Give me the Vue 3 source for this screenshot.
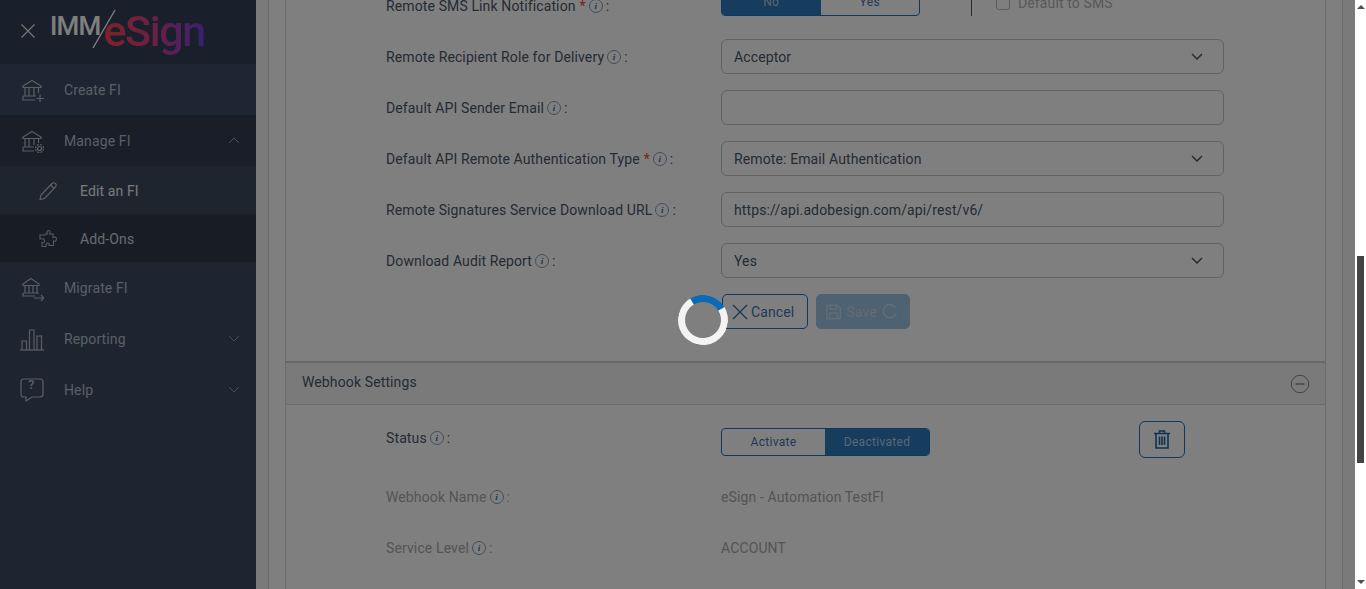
<script setup>
const rows = [
  { label: 'Remote Recipient Role for Delivery', type: 'select', value: 'Acceptor' },
  { label: 'Default API Sender Email', type: 'input', value: '' },
  { label: 'Default API Remote Authentication Type', star: true, type: 'select', value: 'Remote: Email Authentication' },
  { label: 'Remote Signatures Service Download URL', type: 'input', value: 'https://api.adobesign.com/api/rest/v6/' },
  { label: 'Download Audit Report', type: 'select', value: 'Yes' }
]
</script>

<template>
  <div class="root">
    <aside class="side">
      <div class="brand">
        <svg class="close" width="14" height="14" viewBox="0 0 14 14"><path d="M0.5 0.5L13.5 13.5M13.5 0.5L0.5 13.5" fill="none" stroke="#e8e8e8" stroke-width="1.3"/></svg>
        <div class="logo">
          <span class="imm">IMM</span>
          <svg class="slash" width="24" height="40" viewBox="0 0 24 40"><path d="M1 39L23 1" stroke="#ffffff" stroke-width="1.400" fill="none"/></svg>
          <span class="esign">eSign</span>
        </div>
      </div>

      <div class="item create">
        <svg class="ico" width="24" height="26" viewBox="0 0 24 26" fill="none" stroke="#b4bec9" stroke-width="1.2"><path d="M3 9L12 3.5L21 9V10.5H3Z"/><path d="M5 10.5V19M9 10.5V19M14 10.5V19M18.500 10.500V16"/><path d="M3 19H16M3 19V23H15"/><path d="M20 17.500V25M16.500 21.500H24"/></svg>
        <span>Create FI</span>
      </div>
      <div class="item manage">
        <svg class="ico" width="24" height="26" viewBox="0 0 24 26" fill="none" stroke="#b4bec9" stroke-width="1.2"><path d="M3 9L12 3.500L21 9V10.500H3Z"/><path d="M5 10.500V19M9 10.500V19M14 10.500V17M18.500 10.500V15"/><path d="M3 19H14M3 19V23H14"/><circle cx="19.500" cy="20.500" r="2"/><circle cx="19.500" cy="20.500" r="4" stroke-dasharray="2 1.140"/></svg>
        <span>Manage FI</span>
        <svg class="chev" width="12" height="7" viewBox="0 0 12 7"><path d="M1 6L6 1L11 6" fill="none" stroke="#8e9aa8" stroke-width="1"/></svg>
      </div>
      <div class="sub edit">
        <svg width="20" height="20" viewBox="0 0 20 20" fill="none" stroke="#c0c4ca" stroke-width="1.1"><path d="M3 14L14 2.500Q16 1 17.500 2.500T17.500 6L6.500 17.500L2 18.500Z"/><path d="M12.500 4L16 7.500"/></svg>
        <span>Edit an FI</span>
      </div>
      <div class="sub addons">
        <svg width="20" height="20" viewBox="0 0 20 20" fill="none" stroke="#aab4c0" stroke-width="1.1"><path d="M7 5H9.500Q8 2 10.500 1.500Q13 2 11.500 5H15V8.500Q18 7 18.500 10Q18 13 15.500 12V16.500H11Q12 14 9.500 14Q7.500 14.500 8 17.500H4V13.500Q7 14 6.500 11.500Q6 9 2 10V6H7Z"/></svg>
        <span>Add-Ons</span>
      </div>
      <div class="item">
        <svg class="ico" width="24" height="26" viewBox="0 0 24 26" fill="none" stroke="#b4bec9" stroke-width="1.2"><path d="M3 9L11 3.500L19 9V10.500H3Z"/><path d="M5 10.500V18M9 10.500V18M13 10.500V18M17 10.500V18"/><path d="M3 18H19M3 18V21H15"/><path d="M14 23H24M21 20L24 23L21 26"/></svg>
        <span>Migrate FI</span>
      </div>
      <div class="item">
        <svg class="ico" width="24" height="26" viewBox="0 0 24 26" fill="none" stroke="#b4bec9" stroke-width="1.2"><path d="M0 24H24"/><path d="M2 24V15H6.500V24M9.500 24V4H14V24M17 24V10H21.500V24"/></svg>
        <span>Reporting</span>
        <svg class="chev" width="12" height="7" viewBox="0 0 12 7"><path d="M1 1L6 6L11 1" fill="none" stroke="#8e9aa8" stroke-width="1"/></svg>
      </div>
      <div class="item">
        <svg class="ico" width="24" height="26" viewBox="0 0 24 26" fill="none" stroke="#b4bec9" stroke-width="1.2"><path d="M4 2H20Q23 2 23 5V17Q23 20 20 20H12L6 24V20H4Q1 20 1 17V5Q1 2 4 2Z"/></svg>
        <span class="qm">?</span>
        <span>Help</span>
        <svg class="chev" width="12" height="7" viewBox="0 0 12 7"><path d="M1 1L6 6L11 1" fill="none" stroke="#8e9aa8" stroke-width="1"/></svg>
      </div>
    </aside>

    <main class="main">
      <div class="panel">
        <div class="card">
          <section class="form">
            <div class="row">
              <div class="label">Remote SMS Link Notification<span class="star">*</span><i class="info">i</i><span class="colon">:</span></div>
              <div class="top-ctl">
                <div class="toggle sms"><span class="on">No</span><span>Yes</span></div>
                <span class="vline"></span>
                <span class="check"></span>
                <span class="check-text">Default to SMS</span>
              </div>
            </div>

            <div v-for="r in rows" :key="r.label" class="row">
              <div class="label">{{ r.label }}<span v-if="r.star" class="star">*</span><i class="info">i</i><span class="colon">:</span></div>
              <div class="control">
                <span>{{ r.value }}</span>
                <svg v-if="r.type === 'select'" width="12" height="7" viewBox="0 0 12 7"><path d="M1 1L6 6L11 1" fill="none" stroke="#4a5668" stroke-width="1.500"/></svg>
              </div>
            </div>

            <div class="row btn-row">
              <div></div>
              <div class="btns">
                <button class="btn cancel">
                  <svg width="16" height="16" viewBox="0 0 16 16"><path d="M1 1L15 15M15 1L1 15" fill="none" stroke="#2a6aa6" stroke-width="1.200"/></svg>
                  Cancel
                </button>
                <button class="btn save">
                  <svg width="16" height="16" viewBox="0 0 16 16" fill="none" stroke="#c8d8e8" stroke-width="1.600"><path d="M1 1H12L15 4V15H1Z"/><path d="M4 1V5H11V1M4 15V9H12V15"/></svg>
                  Save
                  <svg width="16" height="16" viewBox="0 0 16 16" fill="none" stroke="#c8d8e8" stroke-width="1.600"><path d="M14 3A7 7 0 1 0 15 9"/></svg>
                </button>
              </div>
            </div>
          </section>

          <header class="sec-head">
            <span>Webhook Settings</span>
            <svg width="20" height="20" viewBox="0 0 20 20" fill="none"><circle cx="10" cy="10" r="8.700" stroke="#6a7a90" stroke-width="0.900"/><path d="M5.500 10H14.500" stroke="#666" stroke-width="1.100"/></svg>
          </header>

          <section class="form hook">
            <div class="row status">
              <div class="label">Status<i class="info">i</i><span class="colon">:</span></div>
              <div class="status-ctl">
                <div class="toggle hook-t"><span class="act">Activate</span><span class="on">Deactivated</span></div>
                <button class="trash">
                  <svg width="16" height="19" viewBox="0 0 16 19" fill="none" stroke="#1c66aa" stroke-width="1.600"><path d="M0 3.500H16M5.500 3V1H10.500V3"/><path d="M2 3.500V18H14V3.500"/><path d="M5.500 6.500V15M8 6.500V15M10.500 6.500V15"/></svg>
                </button>
              </div>
            </div>
            <div class="row muted">
              <div class="label">Webhook Name<i class="info">i</i><span class="colon">:</span></div>
              <div>eSign - Automation TestFI</div>
            </div>
            <div class="row muted">
              <div class="label">Service Level<i class="info">i</i><span class="colon">:</span></div>
              <div>ACCOUNT</div>
            </div>
          </section>
        </div>
      </div>
    </main>

    <div class="bar">
      <span class="arrow up"></span>
      <span class="thumb"></span>
      <span class="arrow down"></span>
    </div>

    <div class="scrim"></div>
    <div class="spinner"></div>
  </div>
</template>

<style scoped>
.root {
  position: relative;
  display: flex;
  width: 100%;
  height: 589px;
  overflow: hidden;
  font-family: Roboto, "Liberation Sans", sans-serif;
  font-size: 14px;
  letter-spacing: 0.12px;
  color: #4a5668;
}
.side {
  flex: 0 0 256px;
  background: #3c4a62;
  color: #b4becc;
}
.brand {
  display: flex;
  align-items: flex-start;
  height: 64px;
  background: #333f56;
  padding-left: 21px;
}
.close { margin-top: 24px; }
.logo {
  display: flex;
  align-items: flex-start;
  margin-left: 15px;
}
.imm {
  font-size: 26px;
  font-weight: 500;
  letter-spacing: -0.8px;
  line-height: 30px;
  margin-top: 11px;
  color: #fff;
}
.slash { margin: 9px 0 0 -8px; }
.esign {
  font-size: 43px;
  font-weight: 500;
  line-height: 50px;
  margin: 6px 0 0 -13px;
  letter-spacing: -1.4px;
  background: linear-gradient(90deg, #ff4450 0%, #d84088 50%, #7040e0 100%);
  -webkit-background-clip: text;
  background-clip: text;
  color: transparent;
}
.item {
  position: relative;
  display: flex;
  align-items: center;
  height: 51px;
  padding-left: 20px;
}
.item .ico { margin-right: 20px; }
.create { background: #3e4c66; }
.manage { background: #333d50; }
.chev { margin-left: auto; margin-right: 16px; }
.qm {
  position: absolute;
  left: 28px;
  top: 13px;
  font-size: 13px;
  font-weight: 500;
  color: #b4bec9;
}
.sub {
  display: flex;
  align-items: center;
  height: 48px;
  box-sizing: border-box;
  padding: 2px 0 0 38px;
  gap: 22px;
}
.edit { background: #3c4a5e; color: #f0f2f5; }
.addons { background: #303a4a; color: #d0d6de; }

.main {
  flex: 1;
  min-width: 0;
  background: #f5f5f5;
  padding: 0 12px;
  overflow: hidden;
}
.panel {
  height: calc(100% + 20px);
  box-sizing: border-box;
  background: #fff;
  border: solid #d6d6d6;
  border-width: 0 1px;
  padding: 0 16px;
  margin-top: -20px;
}
.card {
  height: 100%;
  border: solid #d6d6d6;
  border-width: 0 1px;
}
.form { padding-left: 100px; }
.form:first-child { padding-bottom: 24px; }
.row {
  display: grid;
  grid-template-columns: 335px 503px;
  align-items: center;
  height: 51px;
}
.label {
  display: flex;
  align-items: center;
}
.star { color: #e24a4a; margin-left: 4px; }
.info {
  display: inline-flex;
  align-items: center;
  justify-content: center;
  width: 14px;
  height: 14px;
  margin-left: 3px;
  box-sizing: border-box;
  border: 1px solid #8a9ab0;
  border-radius: 50%;
  font: italic bold 9px "Liberation Serif", serif;
  color: #2a6aa6;
}
.colon { margin-left: 3px; }
.top-ctl {
  display: flex;
  align-items: flex-start;
  align-self: start;
  margin-top: 8px;
}
.toggle {
  display: flex;
  height: 28px;
  box-sizing: border-box;
  border: 1px solid #1c70bc;
  border-radius: 4px;
  overflow: hidden;
  font-size: 12px;
  letter-spacing: 0.3px;
}
.toggle span {
  display: flex;
  align-items: center;
  justify-content: center;
  flex: 1;
  color: #3c74b0;
}
.toggle .on {
  background: #2c78bc;
  color: #b4d0ea;
}
.toggle .act { flex: 0 0 103px; }
.sms { width: 199px; }
.vline {
  width: 1px;
  height: 28px;
  margin-left: 51px;
  background: #4a5668;
}
.check {
  width: 14px;
  height: 14px;
  margin: 8px 0 0 24px;
  box-sizing: border-box;
  border: 1px solid #bcbcbc;
  border-radius: 3px;
}
.check-text {
  margin: 5px 0 0 8px;
  color: #b0b0b0;
  line-height: 20px;
}
.control {
  display: flex;
  align-items: center;
  justify-content: space-between;
  height: 35px;
  box-sizing: border-box;
  padding: 0 20px 0 12px;
  border: 1px solid #c4c4c4;
  border-radius: 6px;
}
.btns {
  display: flex;
  gap: 8px;
  padding-left: 1px;
}
.btn {
  display: flex;
  align-items: center;
  gap: 3px;
  height: 35px;
  box-sizing: border-box;
  padding: 0 12px 0 9px;
  border-radius: 5px;
  font: inherit;
  letter-spacing: inherit;
}
.cancel {
  width: 86px;
  background: #fff;
  border: 1px solid #1c70bc;
  color: #3c74b0;
}
.save {
  width: 94px;
  gap: 5px;
  background: #9cc4e4;
  border: 1px solid #9cc4e4;
  color: #c8d8e8;
}
.sec-head {
  display: flex;
  align-items: center;
  justify-content: space-between;
  height: 44px;
  box-sizing: border-box;
  padding: 0 15px 4px 16px;
  background: #f5f5f5;
  border-top: 2px solid #d0d0d0;
  border-bottom: 1px solid #d6d6d6;
}
.sec-head svg { margin-top: 4px; }
.hook { padding-top: 16px; }
.status {
  height: 37px;
  margin-bottom: 13px;
  align-items: start;
}
.status .label { height: 34px; }
.status-ctl {
  display: flex;
  align-items: flex-start;
  gap: 209px;
}
.hook-t {
  width: 209px;
  margin-top: 7px;
}
.trash {
  display: flex;
  align-items: center;
  justify-content: center;
  width: 46px;
  height: 37px;
  background: #fff;
  border: 1px solid #1c70bc;
  border-radius: 6px;
  padding: 0;
}
.muted { color: #a8a8a8; }
.muted .label { color: #a8a8a8; }

.bar {
  flex: 0 0 11px;
  display: flex;
  flex-direction: column;
  align-items: flex-start;
  background: #fff;
}
.arrow {
  margin-left: 2px;
  width: 0;
  height: 0;
  border-left: 4px solid transparent;
  border-right: 4px solid transparent;
}
.up {
  margin-top: 5px;
  border-bottom: 4px solid #505050;
}
.thumb {
  margin: 247px 0 0 2px;
  width: 7px;
  height: 207px;
  background: #444;
}
.down {
  margin-top: auto;
  margin-bottom: 5px;
  border-top: 4px solid #505050;
}
.scrim {
  position: absolute;
  inset: 0 11px 0 0;
  background: rgba(0, 0, 0, 0.5);
}
.spinner {
  position: absolute;
  left: 678px;
  top: 295px;
  width: 50px;
  height: 50px;
  box-sizing: border-box;
  border: 7px solid #f3f3f3;
  border-top-color: #0a6ab8;
  border-radius: 50%;
  transform: rotate(14deg);
}
</style>

<style>
html, body { margin: 0; overflow: hidden; background: #fff; }
</style>
